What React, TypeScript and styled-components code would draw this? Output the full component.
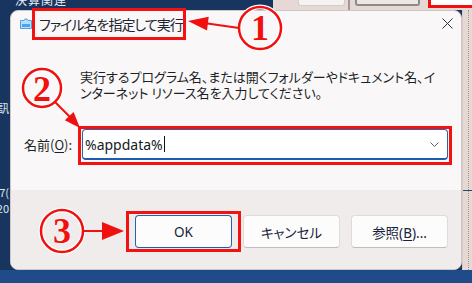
import React from 'react';
import styled, { createGlobalStyle } from 'styled-components';

const GlobalStyle = createGlobalStyle`
  html, body {
    margin: 0;
    padding: 0;
    background: #17355e;
  }
  body {
    font-family: "Noto Sans", "Noto Sans CJK JP", sans-serif;
  }
`;

const Desktop = styled.div`
  position: relative;
  width: 472px;
  height: 283px;
  overflow: hidden;
  display: grid;
  grid-template-columns: 10px 452px 10px;
  grid-template-rows: 10px 260px 13px;
  background: #17355e;
`;

/* ---------- things around the dialog ---------- */

const TopStrip = styled.div`
  grid-column: 1 / -1;
  grid-row: 1;
  display: flex;
  overflow: hidden;
`;

const NavyPart = styled.div`
  width: 273px;
  background: #17355e;
  color: #e8edf5;
  font-family: "Noto Sans CJK JP", sans-serif;
  font-size: 12px;
  line-height: 12px;
  padding-left: 15px;
  box-sizing: border-box;
  overflow: hidden;

  span {
    display: block;
    margin-top: -6px;
    letter-spacing: 1px;
  }
`;

const OtherWindow = styled.div`
  flex: 1;
  display: flex;
  align-items: flex-start;
  background: #e6d9d5;
`;

const TabBox = styled.div<{ $w: number; $ml: number; $tone: 'light' | 'gray' }>`
  width: ${p => p.$w}px;
  margin-left: ${p => p.$ml}px;
  height: 6px;
  box-sizing: border-box;
  background: ${p => (p.$tone === 'light' ? '#f6f2f1' : '#ece6e4')};
  border: ${p => (p.$tone === 'light' ? '1px solid #d6cccb' : '2px solid #8d8a8a')};
  border-top: none;
  border-radius: 0 0 3px 3px;
`;

const Divider = styled.div`
  width: 2px;
  height: 10px;
  margin-left: 3px;
  background: #a49693;
`;

const RedCorner = styled.div`
  flex: 1;
  margin-left: 8px;
  height: 8px;
  box-sizing: border-box;
  background: #ffffff;
  border-left: 3px solid #f01010;
  border-bottom: 3px solid #f01010;
`;

const LeftStrip = styled.div`
  grid-column: 1;
  grid-row: 2;
  display: flex;
  flex-direction: column;
  align-items: flex-end;
  overflow: hidden;
  color: #dfe6f0;
  font-family: "Noto Sans CJK JP", sans-serif;
  font-size: 11px;
  line-height: 12px;
`;

const Fragment = styled.span<{ $mt: number }>`
  margin-top: ${p => p.$mt}px;
  margin-right: 1px;
  white-space: nowrap;
`;

const RightStrip = styled.div`
  grid-column: 3;
  grid-row: 2;
  display: flex;
  flex-direction: column;
  background: #e6d9d5;
  border-left: 1px solid #d8cbc7;
  box-sizing: border-box;
  position: relative;

  &::after {
    content: '';
    position: absolute;
    top: 0;
    bottom: 0;
    right: 3px;
    border-right: 1px dotted #a3918d;
  }
`;

const RightRule = styled.div`
  margin-top: 180px;
  height: 1px;
  background: #27456e;
`;

const BottomStrip = styled.div`
  grid-column: 1 / -1;
  grid-row: 3;
  background: #1f4c89;
`;

/* ---------- dialog ---------- */

const Dialog = styled.div`
  grid-column: 2;
  grid-row: 2;
  display: flex;
  flex-direction: column;
  background: #f9f7f7;
  border: 1px solid #cdc7c7;
  border-radius: 8px;
  overflow: hidden;
  box-sizing: border-box;
  color: #1b1f26;
`;

const TitleBar = styled.div`
  height: 39px;
  display: flex;
  align-items: center;
  padding: 0 8px 14px 9px;
  box-sizing: border-box;
`;

const TitleText = styled.span`
  margin-left: 7px;
  font-family: "Noto Sans CJK JP", sans-serif;
  font-size: 14px;
  letter-spacing: -1px;
  font-feature-settings: "palt";
  color: #1c2430;
  flex: 1;
`;

const CloseButton = styled.span`
  display: flex;
  width: 11px;
  height: 11px;
`;

const Body = styled.div`
  flex: 1;
  display: flex;
  flex-direction: column;
  padding: 19px 13px 0 13px;
`;

const Description = styled.p`
  margin: 0 0 0 56px;
  font-family: "Noto Sans CJK JP", sans-serif;
  font-size: 13px;
  line-height: 16px;
  font-feature-settings: "palt";
  white-space: nowrap;
`;

const FieldRow = styled.div`
  margin-top: 28px;
  display: grid;
  grid-template-columns: 58px 1fr;
  align-items: center;
`;

const Label = styled.label`
  font-family: "Noto Sans CJK JP", sans-serif;
  font-size: 13px;
  font-feature-settings: "palt";

  u {
    text-underline-offset: 2px;
  }
`;

const Combo = styled.div`
  height: 31px;
  display: flex;
  align-items: center;
  padding: 0 8px 0 2px;
  background: #ffffff;
  border: 1px solid #2a64a9;
  border-bottom: 2px solid #1d5cae;
  border-radius: 4px;
  box-sizing: border-box;
`;

const ComboValue = styled.span`
  font-family: "Noto Sans", sans-serif;
  font-size: 14px;
  color: #151a22;
`;

const Caret = styled.span`
  width: 1px;
  height: 16px;
  background: #111;
  margin-left: 1px;
`;

const Chevron = styled.svg`
  margin-left: auto;
`;

const Footer = styled.div`
  height: 79px;
  display: flex;
  justify-content: flex-end;
  align-items: flex-start;
  gap: 11px;
  padding: 25px 13px 0 0;
  box-sizing: border-box;
  background: #f1ecec;
`;

const Button = styled.button<{ $primary?: boolean }>`
  width: 97px;
  height: 33px;
  border-radius: 4px;
  background: #fdfcfc;
  border: 1px solid ${p => (p.$primary ? '#2462aa' : '#e0dada')};
  border-bottom-color: ${p => (p.$primary ? '#1d5cae' : '#c2bcbc')};
  font-family: "Noto Sans", "Noto Sans CJK JP", sans-serif;
  font-size: 13.5px;
  font-feature-settings: "palt";
  color: #16233a;
  padding: 0;

  u {
    text-underline-offset: 2px;
  }
`;

/* ---------- red annotations over the screenshot ---------- */

const Overlay = styled.div`
  position: absolute;
  inset: 0;
  pointer-events: none;
`;

const RedBox = styled.div<{ $x: number; $y: number; $w: number; $h: number }>`
  position: absolute;
  left: ${p => p.$x}px;
  top: ${p => p.$y}px;
  width: ${p => p.$w}px;
  height: ${p => p.$h}px;
  border: 3px solid #f21212;
  box-sizing: border-box;
`;

const Digit = styled.span<{ $x: number; $y: number }>`
  position: absolute;
  left: ${p => p.$x}px;
  top: ${p => p.$y}px;
  width: 40px;
  margin-left: -20px;
  text-align: center;
  font-family: "Liberation Serif", serif;
  font-weight: 700;
  font-size: 36px;
  line-height: 36px;
  color: #f01010;
  text-shadow: 0 0 1px #fff, 0 0 2px #fff;
`;

const RED = '#f01010';

const RunIcon = () => (
  <svg width="12" height="11" viewBox="0 0 12 11">
    <path d="M0.5 2.5 H4 L5 1 H7 L8 2.5 H11.5 V10.5 H0.5 Z" fill="#b9dcf8" stroke="#4ea3ea" />
    <rect x="2" y="6" width="8" height="3" fill="#4ea3ea" />
  </svg>
);

const Circle = ({ cx, cy, r }: { cx: number; cy: number; r: number }) => (
  <g>
    <circle cx={cx} cy={cy} r={r} fill="none" stroke="#ffffff" strokeWidth="5" />
    <circle cx={cx} cy={cy} r={r} fill="none" stroke={RED} strokeWidth="2.5" />
  </g>
);

export default function App() {
  return (
    <>
      <GlobalStyle />
      <Desktop>
        <TopStrip>
          <NavyPart>
            <span>決算関連</span>
          </NavyPart>
          <OtherWindow>
            <TabBox $w={47} $ml={25} $tone="light" />
            <Divider />
            <TabBox $w={65} $ml={5} $tone="gray" />
            <RedCorner />
          </OtherWindow>
        </TopStrip>

        <LeftStrip>
          <Fragment $mt={92}>訊</Fragment>
          <Fragment $mt={72}>7(</Fragment>
          <Fragment $mt={4}>20</Fragment>
        </LeftStrip>

        <Dialog>
          <TitleBar>
            <RunIcon />
            <TitleText>ファイル名を指定して実行</TitleText>
            <CloseButton>
              <svg width="11" height="11" viewBox="0 0 11 11">
                <path d="M0.5 0.5 L10.5 10.5 M10.5 0.5 L0.5 10.5" stroke="#27323f" strokeWidth="1" />
              </svg>
            </CloseButton>
          </TitleBar>

          <Body>
            <Description>
              実行するプログラム名、または開くフォルダーやドキュメント名、イ
              <br />
              ンターネット リソース名を入力してください。
            </Description>
            <FieldRow>
              <Label>
                名前(<u>O</u>):
              </Label>
              <Combo>
                <ComboValue>%appdata%</ComboValue>
                <Caret />
                <Chevron width="9" height="5" viewBox="0 0 9 5">
                  <polyline points="0.5,0.5 4.5,4.5 8.5,0.5" fill="none" stroke="#5d5d5d" strokeWidth="1" />
                </Chevron>
              </Combo>
            </FieldRow>
          </Body>

          <Footer>
            <Button $primary>OK</Button>
            <Button>キャンセル</Button>
            <Button>
              参照(<u>B</u>)...
            </Button>
          </Footer>
        </Dialog>

        <RightStrip>
          <RightRule />
        </RightStrip>
        <BottomStrip />

        <Overlay>
          <RedBox $x={32} $y={8} $w={154} $h={32} />
          <RedBox $x={78} $y={126} $w={374} $h={39} />
          <RedBox $x={126} $y={211} $w={115} $h={41} />

          <svg width="472" height="283" viewBox="0 0 472 283" style={{ position: 'absolute', left: 0, top: 0 }}>
            <Circle cx={260} cy={28} r={21} />
            <Circle cx={42} cy={88} r={19} />
            <Circle cx={62} cy={231} r={21} />

            <line x1="239" y1="28" x2="204" y2="23" stroke={RED} strokeWidth="2" />
            <polygon points="188,21 207,30.6 208.7,16.7" fill={RED} />

            <line x1="55" y1="102" x2="70" y2="117" stroke={RED} strokeWidth="2" />
            <polygon points="80,128 64.8,120.3 73.6,112.1" fill={RED} />

            <line x1="84" y1="231" x2="105" y2="231" stroke={RED} strokeWidth="2" />
            <polygon points="124,231 102,222 102,240" fill={RED} />
          </svg>

          <Digit $x={260} $y={10}>1</Digit>
          <Digit $x={42} $y={71}>2</Digit>
          <Digit $x={62} $y={213}>3</Digit>
        </Overlay>
      </Desktop>
    </>
  );
}
